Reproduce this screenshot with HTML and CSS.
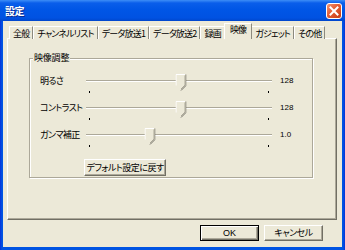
FILE: index.html
```html
<!DOCTYPE html>
<html lang="ja">
<head>
  <meta charset="UTF-8" />
  <title>設定</title>
  <link rel="stylesheet" href="styles.css">
</head>
<body>

  <div class="window">
    <!-- TITLE BAR -->
    <div class="titlebar">
      <span class="title">設定</span>
      <button class="close" aria-label="閉じる">
        <svg viewBox="0 0 16 16" width="16" height="16">
          <defs>
            <linearGradient id="closeFill" x1="0" y1="0" x2="1" y2="1">
              <stop offset="0" stop-color="#F39A7A"/>
              <stop offset="0.45" stop-color="#E45C33"/>
              <stop offset="1" stop-color="#C23A14"/>
            </linearGradient>
          </defs>
          <rect x="0.5" y="0.5" width="15" height="15" rx="2.5" fill="url(#closeFill)" stroke="#fff"/>
          <path d="M4.5 4.5 L11.5 11.5 M11.5 4.5 L4.5 11.5" stroke="#fff" stroke-width="2" stroke-linecap="square"/>
        </svg>
      </button>
    </div>

    <div class="client">
      <div class="tabs">
        <div class="tab">全般</div>
        <div class="tab">チャンネルリスト</div>
        <div class="tab">データ放送1</div>
        <div class="tab">データ放送2</div>
        <div class="tab">録画</div>
        <div class="tab active">映像</div>
        <div class="tab">ガジェット</div>
        <div class="tab">その他</div>
      </div>

      <div class="page">
        <div class="group">
          <span class="group-title">映像調整</span>

          <div class="row">
            <span class="label">明るさ</span>
            <div class="slider">
              <div class="track"></div>
              <i class="tick tick-start"></i><i class="tick tick-end"></i>
              <svg class="thumb" style="left: 51%" viewBox="0 0 11 17" width="11" height="17">
                <path d="M0.5 0.5 H10.5 V11.5 L5.5 16.5 L0.5 11.5 Z" fill="#ECE9D8"/>
                <path d="M0.5 11.5 V0.5 H9.5" fill="none" stroke="#fff"/>
                <path d="M10.5 0.5 V11.5 L5.5 16.5" fill="none" stroke="#716F64"/>
                <path d="M9.5 1.5 V11 L5.5 15" fill="none" stroke="#ACA899"/>
              </svg>
            </div>
            <span class="value">128</span>
          </div>

          <div class="row">
            <span class="label">コントラスト</span>
            <div class="slider">
              <div class="track"></div>
              <i class="tick tick-start"></i><i class="tick tick-end"></i>
              <svg class="thumb" style="left: 51%" viewBox="0 0 11 17" width="11" height="17">
                <path d="M0.5 0.5 H10.5 V11.5 L5.5 16.5 L0.5 11.5 Z" fill="#ECE9D8"/>
                <path d="M0.5 11.5 V0.5 H9.5" fill="none" stroke="#fff"/>
                <path d="M10.5 0.5 V11.5 L5.5 16.5" fill="none" stroke="#716F64"/>
                <path d="M9.5 1.5 V11 L5.5 15" fill="none" stroke="#ACA899"/>
              </svg>
            </div>
            <span class="value">128</span>
          </div>

          <div class="row">
            <span class="label">ガンマ補正</span>
            <div class="slider">
              <div class="track"></div>
              <i class="tick tick-start"></i><i class="tick tick-end"></i>
              <svg class="thumb" style="left: 34.5%" viewBox="0 0 11 17" width="11" height="17">
                <path d="M0.5 0.5 H10.5 V11.5 L5.5 16.5 L0.5 11.5 Z" fill="#ECE9D8"/>
                <path d="M0.5 11.5 V0.5 H9.5" fill="none" stroke="#fff"/>
                <path d="M10.5 0.5 V11.5 L5.5 16.5" fill="none" stroke="#716F64"/>
                <path d="M9.5 1.5 V11 L5.5 15" fill="none" stroke="#ACA899"/>
              </svg>
            </div>
            <span class="value">1.0</span>
          </div>

          <button class="btn reset">デフォルト設定に戻す</button>
        </div>
      </div>

      <div class="actions">
        <button class="btn default">OK</button>
        <button class="btn">キャンセル</button>
      </div>
    </div>
  </div>

</body>
</html>
```

FILE: styles.css
```css
html, body {
  margin: 0; padding: 0;
  background: #0054E3;
}
.window {
  width: 345px;
  height: 250px;
  display: flex;
  flex-direction: column;
  background: linear-gradient(to right, #0831D9, #0054E3 2px, #0054E3 calc(100% - 2px), #0831D9);
  font-family: "Noto Sans CJK JP", sans-serif;
  font-size: 9px;
  font-feature-settings: "palt";
  color: #000;
  box-sizing: border-box;
}
.titlebar {
  height: 21px;
  flex: none;
  display: flex;
  align-items: center;
  justify-content: space-between;
  padding: 0 3px 0 5px;
  background: linear-gradient(#3D8EF7 0%, #0A5EEA 3px, #0056E6 45%, #0052E2 85%, #0046CC 100%);
}
.title {
  color: #fff;
  font-weight: bold;
  font-size: 10px;
  line-height: 14px;
  letter-spacing: -0.5px;
  text-shadow: 1px 1px 0 #0B2C8E;
}
.close {
  width: 16px;
  height: 16px;
  padding: 0;
  border: 0;
  background: none;
  display: block;
}
.close svg { display: block; }
.client {
  flex: 1;
  margin: 0 3px 3px 3px;
  padding: 2px 5px 0 4px;
  background: #ECE9D8;
  display: flex;
  flex-direction: column;
}
.tabs {
  height: 16px;
  display: flex;
  align-items: flex-end;
  padding-left: 2px;
  margin-bottom: -1px;
  position: relative;
  z-index: 1;
}
.tab {
  height: 12px;
  line-height: 13px;
  padding: 0 3px;
  border-left: 1px solid #fff;
  border-top: 1px solid #fff;
  border-right: 1px solid #8C8A7E;
  white-space: nowrap;
  letter-spacing: -0.8px;
  background: #ECE9D8;
}
.tab.active {
  height: 15px;
  line-height: 12px;
  padding: 0 5px;
  margin: 0 -1px;
  position: relative;
}
.page {
  width: 330px;
  height: 182px;
  box-sizing: border-box;
  border: 1px solid;
  border-color: #fff #716F64 #716F64 #fff;
  box-shadow: inset -1px -1px 0 #ACA899;
  padding: 19px 0 0 21px;
}
.group {
  position: relative;
  width: 284px;
  box-sizing: border-box;
  border: 1px solid #ACA899;
  box-shadow: inset 1px 1px 0 #fff, 1px 1px 0 #fff;
  padding: 15px 0 1px 10px;
}
.group-title {
  position: absolute;
  top: -8px;
  left: 3px;
  padding: 0 1px;
  line-height: 14px;
  background: #ECE9D8;
  letter-spacing: -0.2px;
}
.row {
  height: 27px;
  display: flex;
  align-items: flex-start;
}
.label {
  width: 46px;
  line-height: 14px;
  letter-spacing: -0.6px;
  white-space: nowrap;
}
.slider {
  width: 186px;
  height: 27px;
  position: relative;
}
.track {
  margin-top: 6px;
  height: 1px;
  background: #ACA899;
  border-bottom: 1px solid #fff;
}
.tick {
  position: absolute;
  top: 17px;
  width: 1px;
  height: 2px;
  background: #000;
}
.tick-start { left: 3px; }
.tick-end { right: 3px; }
.thumb {
  position: absolute;
  top: 0;
  transform: translateX(-50%);
  display: block;
}
.value {
  margin-left: 8px;
  line-height: 14px;
  font-family: "Liberation Sans", sans-serif;
  font-size: 8px;
}
.btn {
  font-family: "Noto Sans CJK JP", sans-serif;
  font-size: 9px;
  font-feature-settings: "palt";
  color: #000;
  background: #ECE9D8;
  border: 1px solid;
  border-color: #fff #716F64 #716F64 #fff;
  box-shadow: inset -1px -1px 0 #ACA899;
  padding: 0;
  height: 17px;
  line-height: 14px;
  letter-spacing: -0.5px;
  white-space: nowrap;
}
.reset {
  display: block;
  width: 82px;
  margin: 4px 0 0 44px;
}
.actions {
  display: flex;
  justify-content: flex-end;
  gap: 5px;
  margin-top: 5px;
  padding-right: 14px;
}
.actions .btn {
  width: 59px;
  height: 16px;
}
.btn.default {
  border-color: #000;
  box-shadow: inset 1px 1px 0 #fff, inset -1px -1px 0 #716F64, inset -2px -2px 0 #ACA899;
  font-family: "Liberation Sans", sans-serif;
  font-size: 9px;
  letter-spacing: 0;
}
```
